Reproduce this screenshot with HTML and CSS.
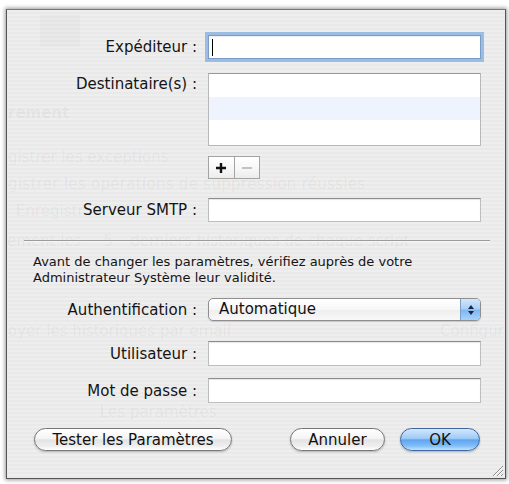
FILE: index.html
```
<!DOCTYPE html>
<html lang="fr">
<head>
<meta charset="utf-8">
<title>Paramètres SMTP</title>
<link rel="stylesheet" href="styles.css">
</head>
<body>
<div class="stage">
  <div class="sheet">
    <div class="ghost" aria-hidden="true">
      <div class="ghost-icon"></div>
      <div class="ghost-line g1">rement</div>
      <div class="ghost-line g2">gistrer les exceptions</div>
      <div class="ghost-line g3">gistrer les opérations de suppression réussies</div>
      <div class="ghost-line g4">Enregistr</div>
      <div class="ghost-line g5">ement les <span class="ghost-gap">5</span>derniers historiques de chaque script</div>
      <div class="ghost-line g6"><span>oyer les historiques par email</span><span>Configur</span></div>
      <div class="ghost-line g7">Les paramètres</div>
    </div>

    <div class="content">
      <div class="row r-exp">
        <label class="lbl">Expéditeur :</label>
        <div class="field focus"><span class="caret"></span></div>
      </div>
      <div class="row r-dest">
        <label class="lbl top">Destinataire(s) :</label>
        <div class="list">
          <div class="list-row"></div>
          <div class="list-row alt"></div>
          <div class="list-row"></div>
        </div>
      </div>
      <div class="row r-seg">
        <span></span>
        <div class="seg">
          <div class="seg-btn">
            <svg width="12" height="12" viewBox="0 0 12 12"><path d="M6 1v10M1 6h10" stroke="#111" stroke-width="2.4"/></svg>
          </div>
          <div class="seg-btn">
            <svg width="12" height="12" viewBox="0 0 12 12"><path d="M1 6h10" stroke="#b4b4b4" stroke-width="1.6"/></svg>
          </div>
        </div>
      </div>
      <div class="row r-smtp">
        <label class="lbl">Serveur SMTP :</label>
        <div class="field"></div>
      </div>
      <div class="sep"></div>
      <p class="note">Avant de changer les paramètres, vérifiez auprès de votre<br>Administrateur Système leur validité.</p>
      <div class="row r-auth">
        <label class="lbl">Authentification :</label>
        <div class="popup">
          <span class="popup-text">Automatique</span>
          <span class="popup-arrows">
            <svg width="8" height="12" viewBox="0 0 8 12"><path d="M4 1L7 5H1Z M4 11L7 7H1Z" fill="#1b2740"/></svg>
          </span>
        </div>
      </div>
      <div class="row r-user">
        <label class="lbl">Utilisateur :</label>
        <div class="field tall"></div>
      </div>
      <div class="row r-pass">
        <label class="lbl">Mot de passe :</label>
        <div class="field tall"></div>
      </div>
      <div class="buttons">
        <button class="btn btn-test">Tester les Paramètres</button>
        <button class="btn btn-cancel">Annuler</button>
        <button class="btn btn-ok">OK</button>
      </div>
    </div>

    <svg class="grip" width="14" height="14" viewBox="0 0 14 14" aria-hidden="true">
      <path d="M13 3L3 13M13 7L7 13M13 11L11 13" stroke="#8a8a8a" stroke-width="1"/>
      <path d="M13 4L4 13M13 8L8 13M13 12L12 13" stroke="#fff" stroke-width="1"/>
    </svg>
  </div>
</div>
</body>
</html>
```
FILE: styles.css
```
html, body {
  margin: 0;
  padding: 0;
  background: #ffffff;
}

body {
  font-family: "DejaVu Sans", "Lucida Grande", sans-serif;
  color: #111;
}

.stage {
  width: 509px;
  height: 484px;
  box-sizing: border-box;
  padding: 9px 3px 5px 6px;
}

.sheet {
  position: relative;
  height: 100%;
  box-sizing: border-box;
  border: 1px solid #555;
  border-top-color: #777;
  overflow: hidden;
  background: repeating-linear-gradient(180deg, #eeeeee 0, #eeeeee 2px, #e9e9e9 2px, #e9e9e9 4px);
  box-shadow: 0 0 4px 1px rgba(0, 0, 0, 0.4);
}

/* faint window behind the translucent sheet */
.ghost {
  position: absolute;
  inset: 0;
  color: rgba(0, 0, 0, 0.055);
  font-size: 15px;
  line-height: 18px;
  pointer-events: none;
}

.ghost-icon {
  width: 40px;
  height: 32px;
  margin: 5px 0 0 33px;
  background: rgba(0, 0, 0, 0.018);
}

.ghost-line {
  white-space: nowrap;
}

.g1 { margin: 57px 0 0 1px; font-weight: bold; }
.g2 { margin: 26px 0 0 1px; }
.g3 { margin: 9px 0 0 1px; letter-spacing: 0.3px; }
.g4 { margin: 9px 0 0 9px; }
.g5 { margin: 12px 0 0 0; }
.ghost-gap { display: inline-block; width: 44px; text-align: center; }
.g6 { margin: 72px 0 0 1px; display: grid; grid-template-columns: 432px auto; }
.g7 { margin: 66px 0 0 93px; line-height: 12px; }

/* dialog content */
.content {
  position: absolute;
  inset: 0;
  padding-top: 25px;
  display: flex;
  flex-direction: column;
}

.row {
  display: grid;
  grid-template-columns: 190px 273px;
  column-gap: 11px;
  align-items: center;
}

.lbl {
  text-align: right;
  font-size: 15px;
  line-height: 18px;
  color: #141414;
}

.lbl.top {
  align-self: start;
  margin-top: 2px;
}

.field {
  height: 24px;
  box-sizing: border-box;
  background: #fff;
  border: 1px solid #bdbdbd;
  border-top-color: #8c8c8c;
  box-shadow: inset 0 1px 1px rgba(0, 0, 0, 0.1);
}

.field.tall {
  height: 25px;
}

.field.focus {
  border-color: #7a9cc8;
  box-shadow: 0 0 0 3px #9bbde4, inset 0 1px 1px rgba(0, 0, 0, 0.08);
  display: flex;
  align-items: center;
}

.caret {
  width: 1px;
  height: 17px;
  margin-left: 3px;
  background: #000;
}

.r-dest { margin-top: 14px; }

.list {
  height: 73px;
  box-sizing: border-box;
  border: 1px solid #b8b8b8;
  border-top-color: #9a9a9a;
  background: #fff;
  display: flex;
  flex-direction: column;
}

.list-row {
  height: 23px;
}

.list-row.alt {
  background: #eef3fd;
}

.r-seg { margin-top: 10px; }

.seg {
  display: flex;
  width: 52px;
  height: 23px;
  box-sizing: border-box;
  border: 1px solid #a3a3a3;
  background: linear-gradient(180deg, #ffffff 0%, #f6f6f6 60%, #ececec 100%);
}

.seg-btn {
  flex: 1;
  display: flex;
  align-items: center;
  justify-content: center;
}

.seg-btn + .seg-btn {
  border-left: 1px solid #a3a3a3;
}

.r-smtp { margin-top: 19px; }

.sep {
  margin: 18px 15px 0 17px;
  height: 1px;
  background: #9c9c9c;
  border-bottom: 1px solid #f6f6f6;
}

.note {
  margin: 12px 0 0 26px;
  font-size: 13px;
  line-height: 16px;
  color: #141414;
}

.r-auth { margin-top: 12px; }

.popup {
  height: 23px;
  box-sizing: border-box;
  display: flex;
  border: 1px solid #8f8f8f;
  border-radius: 5px;
  overflow: hidden;
  background: linear-gradient(180deg, #ffffff 0%, #f7f7f7 50%, #eeeeee 52%, #f8f8f8 100%);
  box-shadow: 0 1px 1px rgba(0, 0, 0, 0.15);
}

.popup-text {
  flex: 1;
  font-size: 15px;
  line-height: 21px;
  padding-left: 10px;
  color: #111;
}

.popup-arrows {
  width: 19px;
  display: flex;
  align-items: center;
  justify-content: center;
  border-left: 1px solid #7d9fc9;
  background: linear-gradient(180deg, #d3e6fb 0%, #a9cef5 48%, #7fb6f1 52%, #a6d3fb 100%);
}

.r-user { margin-top: 20px; }
.r-pass { margin-top: 12px; }

.buttons {
  margin-top: 25px;
  display: flex;
  padding: 0 25px 0 27px;
}

.btn {
  height: 23px;
  box-sizing: border-box;
  padding: 0;
  font-family: inherit;
  font-size: 15px;
  line-height: 20px;
  color: #111;
  border: 1px solid #767676;
  border-radius: 12px;
  background: linear-gradient(180deg, #ffffff 0%, #f4f4f4 45%, #e3e3e3 52%, #eeeeee 80%, #ffffff 100%);
  box-shadow: 0 1px 2px rgba(0, 0, 0, 0.25);
}

.btn-test { width: 198px; }
.btn-cancel { width: 95px; margin-left: auto; }
.btn-ok {
  width: 80px;
  margin-left: 15px;
  border-color: #3f66a3;
  background: linear-gradient(180deg, #d2e8fd 0%, #9fcaf6 45%, #5ea4ee 52%, #80bdf7 80%, #bfe4ff 100%);
}

.grip {
  position: absolute;
  right: 1px;
  bottom: 1px;
}
```
